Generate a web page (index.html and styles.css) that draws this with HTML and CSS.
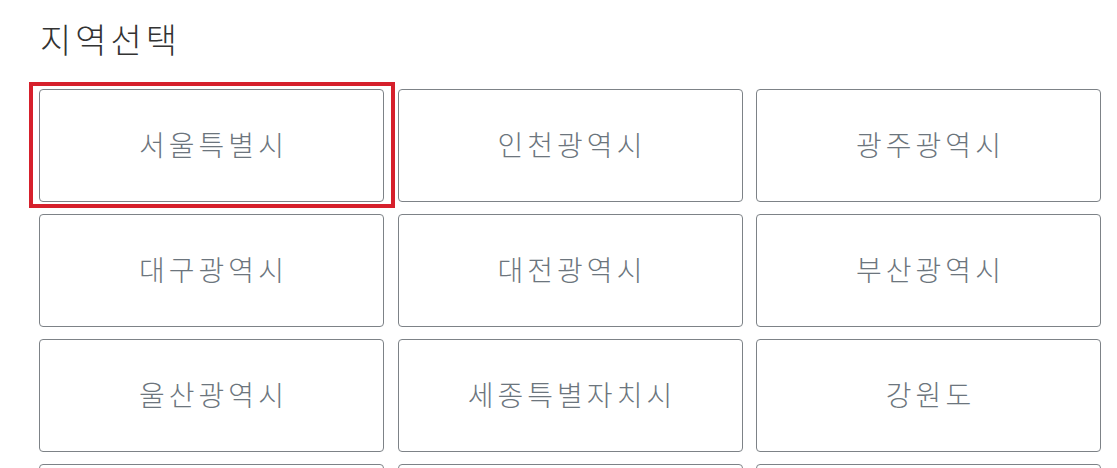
FILE: index.html
```html
<!DOCTYPE html>
<html lang="ko">
<head>
    <meta charset="utf-8">
    <title>지역선택</title>
    <link rel="stylesheet" href="styles.css">
</head>
<body>
<div class="region">
    <h2 class="region-title">지역선택</h2>
    <div class="region-list">
        <button class="region-btn selected">서울특별시</button>
        <button class="region-btn">인천광역시</button>
        <button class="region-btn">광주광역시</button>
        <button class="region-btn">대구광역시</button>
        <button class="region-btn">대전광역시</button>
        <button class="region-btn">부산광역시</button>
        <button class="region-btn">울산광역시</button>
        <button class="region-btn">세종특별자치시</button>
        <button class="region-btn">강원도</button>
        <button class="region-btn">경기도</button>
        <button class="region-btn">경상남도</button>
        <button class="region-btn">경상북도</button>
    </div>
</div>
</body>
</html>
```

FILE: styles.css
```css
*{ margin:0; padding:0; box-sizing:border-box }
html, body{ background:#fff; overflow:hidden }
body{
    font-family:"Noto Sans CJK KR", "Noto Sans", sans-serif;
}
.region{
    padding:19px 17px 0 39px;
}
.region-title{
    font-size:34px; font-weight:300;
    line-height:40px; color:#333;
    letter-spacing:4px;
    margin:0 0 30px 1px;
}
.region-list{
    display:grid;
    grid-template-columns:repeat(3, 345px);
    grid-auto-rows:113px;
    column-gap:13.5px; row-gap:12px;
}
.region-btn{
    font-family:inherit;
    font-size:28px; font-weight:300; color:#6c757d;
    letter-spacing:4px; text-indent:4px;
    padding-bottom:3px;
    background:#fff;
    border:1px solid #7d8287; border-radius:4px;
    cursor:pointer;
}
/* 선택 표시 */
.selected{ position:relative }
.selected::after{
    content:"";
    position:absolute;
    left:-11px; right:-12px; top:-8px; bottom:-7px;
    border:4px solid #d6202c;
}
```
